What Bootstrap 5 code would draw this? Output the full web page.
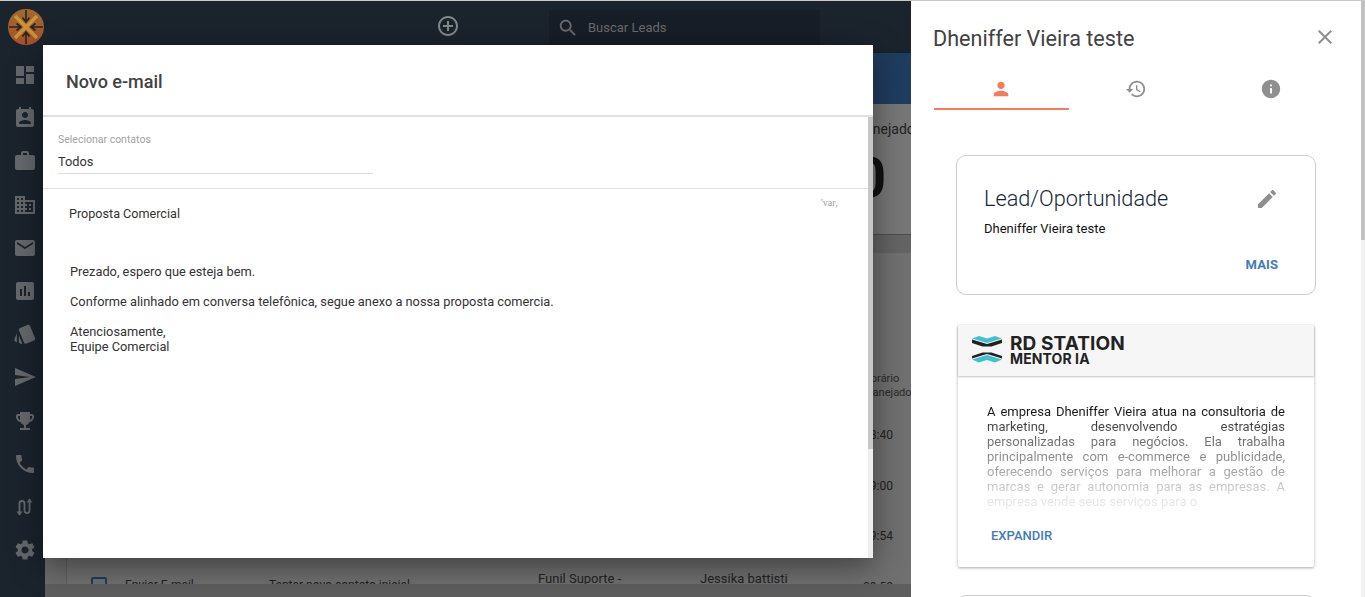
<!DOCTYPE html>
<html lang="pt-BR"><head><meta charset="utf-8"><title>Novo e-mail</title>
<link href="https://cdn.jsdelivr.net/npm/bootstrap@5.3.0/dist/css/bootstrap.min.css" rel="stylesheet">
<style>
html,body{height:100%;overflow:hidden}
body{font-family:Roboto,"Liberation Sans",sans-serif;background:#666;color:#212121;font-size:13px}
.shell{height:597px;border-top:1px solid #c8c8c8;position:relative;overflow:hidden}
.side-rail{width:45px;background:#1b232d;flex:none;padding-left:5px}
.rail-logo{height:50px;padding:8px 0 0 2px}
.rail-icons{gap:19.2px;padding-top:12px}
.rail-icons svg{width:24px;height:24px;fill:#65686c;display:block}
.main-pane{background:#6c6c6c;min-width:0}
.top-strip{height:52px;background:#1b232d;flex:none;padding:9px 0 0 391px}
.top-strip svg{fill:#85888b}
.plus-ico{width:24px;height:24px;margin-top:-2px}
.find-box{width:271px;height:35px;margin-left:89px;background:#181e27;color:#686b6f;font-size:13px;padding-left:8px;gap:9px;margin-top:0}
.find-box svg{width:22px;height:22px;fill:#686b6f!important}
.blue-band{height:51px;background:#1f3d5f;flex:none;box-shadow:0 1px 3px rgba(0,0,0,.4)}
.kpi-strip{height:131px;background:#777;flex:none;padding-left:808px;border-bottom:1px solid #4d4d4d;overflow:hidden}
.kpi-box{width:140px;flex:none}
.kpi-label{font-size:14px;margin-top:17px;color:#222;line-height:17px}
.kpi-num{font-size:56px;font-weight:700;color:#111;line-height:1;margin-top:12px;padding-left:1px}
.gap-strip{height:18px;background:#646464;flex:none}
.list-area{flex:1;min-height:0;padding-left:22px;overflow:hidden}
.list-box{background:#707070;height:100%;box-shadow:-1px 0 0 #5f5f5f;padding-top:119px;color:#222}
.head-row{height:46px;position:relative}
.head-col{position:absolute;left:796px;top:0;font-size:11px;line-height:14px;color:#2a2a2a;white-space:nowrap}
.data-row{height:50.5px;position:relative}
.data-row>span{position:absolute;white-space:nowrap;font-size:12px}
.t-time{left:796px;top:8px}
.row-check{left:24px;top:7px;width:16px;height:16px;border:2px solid #1f3d5f;border-radius:2px}
.c1{left:58px;top:6px}.c2{left:202px;top:6px}.c3{left:471px;top:-1px;font-size:13px!important}.c4{left:633px;top:-1px;font-size:13px!important}
.foot-strip{height:13px;background:#5e5e5e;flex:none}
.mail-dialog{position:absolute;left:43px;top:44px;width:830px;height:513px;background:#fff;box-shadow:0 8px 30px rgba(0,0,0,.45);display:flex;flex-direction:column}
.mail-head{height:72px;flex:none;border-bottom:2px solid #e0e0e0;padding:0 23px;font-size:18px;font-weight:500;color:#424242;line-height:73px}
.mail-body{flex:1;min-height:0}
.mail-scroll{flex:1;min-width:0;overflow:hidden}
.rail-track{background:#eee;flex:none;width:5px}
.rail-thumb{background:#c8c8c8;width:100%}
.thumb-mail{height:332px}
.mail-inner{position:relative}
.contact-area{height:72px;border-bottom:1px solid #e0e0e0;padding:16px 15px 0}
.contact-label{font-size:10.5px;color:#a3a3a3;line-height:13px}
.contact-value{width:315px;border-bottom:1px solid #ddd;line-height:26px;margin-top:3px;height:25px;color:#333;font-size:12.8px}
.mail-text{padding:17px 27px;color:#333;line-height:15px;font-size:12.8px}
.mail-subject{margin-left:-1px;margin-bottom:43px;font-size:12.6px}
.mail-text p{margin:0 0 15px}
.var-mark{position:absolute;left:778px;top:80px;font-family:"Liberation Serif",serif;font-size:10px;color:#999;line-height:12px}
.lead-panel{position:absolute;right:0;top:0;width:454px;height:596px;background:#fff;overflow:hidden}
.lead-rail{position:absolute;right:0;top:0;bottom:0;width:4px;background:#f1f1f1}
.thumb-lead{height:239px;background:#c1c1c1}
.lead-inner{padding:0 0 0 22px}
.lead-title{height:74px;padding-top:21px;padding-right:28px}
.lead-title h1{font-size:21.6px;font-weight:400;color:#424242;margin:0;line-height:34px}
.lead-title svg{width:24px;height:24px;fill:#8f8f8f;margin-top:3px}
.tab-row{width:405px;margin-left:1px}
.tab-item{width:135px;height:35px;text-align:center;border-bottom:2px solid transparent}
.tab-item svg{width:22px;height:22px;fill:#8f8f8f;display:inline-block;margin:3px 2px 0 0}
.tab-item.on{border-bottom-color:#f47c56}
.tab-item.on svg{fill:#f47c56}
.lead-box.card{width:360px;height:140px;margin:45px 0 0 23px;border:1px solid #ccc;border-radius:10px;padding:0 27px;color:#111}
.lead-box-title{font-size:21.7px;font-weight:300;color:#14263a;margin-top:26px;line-height:34px}
.lead-box svg{width:24px;height:24px;fill:#8f8f8f;margin-right:9px}
.lead-name{font-size:13px;line-height:15px;margin-top:5px;color:#111}
.more-link{font-size:13px;font-weight:700;color:#3f7cba;letter-spacing:.1px;margin-top:21px;margin-right:10px;line-height:15px}
.mentor-card.card{width:356px;height:242px;margin:30px 0 0 25px;border:0;border-radius:2px;box-shadow:0 1px 3px rgba(0,0,0,.35)}
.mentor-head{height:51px;background:#f6f6f6;box-shadow:0 1px 2px rgba(0,0,0,.25);padding:10px 0 0 14px;gap:8px}
.mentor-head svg{width:30px;height:30px;flex:none}
.brand-a{font-family:Inter,sans-serif;font-weight:700;font-size:19px;line-height:18px;color:#222;letter-spacing:.1px}
.brand-b{font-family:Inter,sans-serif;font-weight:700;font-size:14px;line-height:12px;color:#222;letter-spacing:.1px}
.mentor-copy{margin:28px 29px 0;height:105px;overflow:hidden;text-align:justify;line-height:15px;font-size:13px;color:#111;-webkit-mask-image:linear-gradient(#000 5%,rgba(0,0,0,.6) 36%,rgba(0,0,0,.38) 64%,rgba(0,0,0,.1) 93%);mask-image:linear-gradient(#000 5%,rgba(0,0,0,.6) 36%,rgba(0,0,0,.38) 64%,rgba(0,0,0,.1) 93%)}
.expand-link{font-size:13px;font-weight:500;color:#3f7cba;margin:19px 0 0 33px;line-height:15px}
.next-box{width:360px;height:200px;margin:28px 0 0 23px;border:1px solid #ccc;border-radius:10px}
</style></head><body>
<div class="shell d-flex">
  <nav class="side-rail d-flex flex-column align-items-center">
    <div class="rail-logo">
      <svg width="36" height="36" viewBox="0 0 36 36"><defs><linearGradient id="lg" x1="0" y1="0" x2="0" y2="1"><stop offset="0" stop-color="#a06a30"/><stop offset="1" stop-color="#a8502c"/></linearGradient></defs>
      <circle cx="18" cy="18" r="18" fill="url(#lg)"/>
      <path d="M7 7L29 29M29 7L7 29" stroke="#c9943a" stroke-width="3.500"/>
      <path d="M18 1v11M14.500 8.500L18 13l3.500-4.500M18 35V24M14.500 27.500L18 23l3.500 4.500M1 18h11M8.500 14.500L13 18l-4.500 3.500M35 18H24M27.500 14.500L23 18l4.500 3.500" stroke="#2a2422" stroke-width="1.600" fill="none"/></svg>
    </div>
    <div class="rail-icons d-flex flex-column">
      <svg viewBox="0 0 24 24"><path d="M3 13h8V3H3v10zm0 8h8v-6H3v6zm10 0h8V11h-8v10zm0-18v6h8V3h-8z"/></svg>
      <svg viewBox="0 0 24 24"><path d="M19 3h-1V1h-2v2H8V1H6v2H5c-1.110 0-2 .9-2 2v14c0 1.100.89 2 2 2h14c1.100 0 2-.9 2-2V5c0-1.100-.9-2-2-2zm-7 3c1.660 0 3 1.340 3 3s-1.340 3-3 3-3-1.340-3-3 1.340-3 3-3zm6 12H6v-1c0-2 4-3.100 6-3.100s6 1.100 6 3.100v1z"/></svg>
      <svg viewBox="0 0 24 24"><path d="M20 6h-4V4c0-1.110-.89-2-2-2h-4c-1.110 0-2 .89-2 2v2H4c-1.110 0-1.990.89-1.990 2L2 19c0 1.110.89 2 2 2h16c1.110 0 2-.89 2-2V8c0-1.110-.89-2-2-2zm-6 0h-4V4h4v2z"/></svg>
      <svg viewBox="0 0 24 24"><path d="M12 7V3H2v18h20V7H12zM6 19H4v-2h2v2zm0-4H4v-2h2v2zm0-4H4V9h2v2zm0-4H4V5h2v2zm4 12H8v-2h2v2zm0-4H8v-2h2v2zm0-4H8V9h2v2zm0-4H8V5h2v2zm10 12h-8v-2h2v-2h-2v-2h2v-2h-2V9h8v10zm-2-8h-2v2h2v-2zm0 4h-2v2h2v-2z"/></svg>
      <svg viewBox="0 0 24 24"><path d="M20 4H4c-1.100 0-1.990.9-1.990 2L2 18c0 1.100.9 2 2 2h16c1.100 0 2-.9 2-2V6c0-1.100-.9-2-2-2zm0 4l-8 5-8-5V6l8 5 8-5v2z"/></svg>
      <svg viewBox="0 0 24 24"><path d="M19 3H5c-1.100 0-2 .9-2 2v14c0 1.100.9 2 2 2h14c1.100 0 2-.9 2-2V5c0-1.100-.9-2-2-2zM9 17H7v-7h2v7zm4 0h-2V7h2v10zm4 0h-2v-4h2v4z"/></svg>
      <svg viewBox="0 0 24 24"><path d="M2.530 19.650l1.340.56v-9.030l-2.430 5.860c-.41 1.020.08 2.190 1.090 2.610zm19.500-3.700L17.070 3.980c-.31-.75-1.040-1.210-1.810-1.230-.26 0-.53.04-.79.15L7.100 5.950c-.75.31-1.210 1.030-1.230 1.800-.01.27.04.54.15.8l4.960 11.970c.31.76 1.050 1.220 1.830 1.230.26 0 .52-.05.77-.15l7.360-3.050c1.020-.42 1.510-1.590 1.090-2.600zM5.880 19.750c0 1.100.9 2 2 2h1.450l-3.450-8.340v6.340z"/></svg>
      <svg viewBox="0 0 24 24"><path d="M2.010 21L23 12 2.010 3 2 10l15 2-15 2z"/></svg>
      <svg viewBox="0 0 24 24"><path d="M19 5h-2V3H7v2H5c-1.100 0-2 .9-2 2v1c0 2.550 1.920 4.630 4.390 4.940.63 1.500 1.980 2.630 3.610 2.960V19H7v2h10v-2h-4v-3.100c1.630-.33 2.980-1.460 3.610-2.960C19.080 12.630 21 10.550 21 8V7c0-1.100-.9-2-2-2zM5 8V7h2v3.820C5.840 10.400 5 9.300 5 8zm14 0c0 1.300-.84 2.400-2 2.820V7h2v1z"/></svg>
      <svg viewBox="0 0 24 24"><path d="M6.620 10.790c1.440 2.830 3.760 5.140 6.590 6.590l2.200-2.200c.27-.27.67-.36 1.020-.24 1.120.37 2.330.57 3.570.57.55 0 1 .45 1 1V20c0 .55-.45 1-1 1-9.390 0-17-7.610-17-17 0-.55.45-1 1-1h3.500c.55 0 1 .45 1 1 0 1.250.2 2.450.57 3.570.11.35.03.74-.25 1.020l-2.200 2.200z"/></svg>
      <svg viewBox="0 0 24 24"><path d="M6.500 20V8.500a2.500 2.500 0 0 1 5 0v7a2.500 2.500 0 0 0 5 0V4" fill="none" stroke="#65686c" stroke-width="1.800"/><path d="M3.500 16.500L6.500 20.500l3-4zM13.500 7.500L16.500 3.500l3 4z"/></svg>
      <svg viewBox="0 0 24 24"><path d="M19.140 12.940c.04-.3.06-.61.06-.94 0-.32-.02-.64-.07-.94l2.030-1.580c.18-.14.23-.41.12-.61l-1.920-3.320c-.12-.22-.37-.29-.59-.22l-2.390.96c-.5-.38-1.030-.7-1.620-.94l-.36-2.540c-.04-.24-.24-.41-.48-.41h-3.840c-.24 0-.43.17-.47.41l-.36 2.540c-.59.24-1.130.57-1.620.94l-2.390-.96c-.22-.08-.47 0-.59.22L2.740 8.870c-.12.21-.08.47.12.61l2.030 1.580c-.05.3-.09.63-.09.94s.02.64.07.94l-2.030 1.580c-.18.14-.23.41-.12.61l1.920 3.320c.12.22.37.29.59.22l2.390-.96c.5.38 1.030.7 1.620.94l.36 2.540c.05.24.24.41.48.41h3.840c.24 0 .44-.17.47-.41l.36-2.540c.59-.24 1.130-.56 1.620-.94l2.390.96c.22.08.47 0 .59-.22l1.920-3.320c.12-.22.07-.47-.12-.61l-2.010-1.580zM12 15.600c-1.980 0-3.600-1.620-3.600-3.600s1.620-3.600 3.600-3.600 3.600 1.620 3.600 3.600-1.620 3.600-3.600 3.600z"/></svg>
    </div>
  </nav>
  <div class="main-pane flex-grow-1 d-flex flex-column">
    <header class="top-strip d-flex align-items-start">
      <svg class="plus-ico mt-1" viewBox="0 0 24 24"><path d="M13 7h-2v4H7v2h4v4h2v-4h4v-2h-4V7zm-1-5C6.480 2 2 6.480 2 12s4.480 10 10 10 10-4.480 10-10S17.520 2 12 2zm0 18c-4.410 0-8-3.590-8-8s3.590-8 8-8 8 3.590 8 8-3.590 8-8 8z"/></svg>
      <div class="find-box d-flex align-items-center">
        <svg viewBox="0 0 24 24"><path d="M15.500 14h-.79l-.28-.27C15.410 12.590 16 11.110 16 9.500 16 5.910 13.090 3 9.500 3S3 5.910 3 9.500 5.910 16 9.500 16c1.610 0 3.090-.59 4.230-1.570l.27.28v.79l5 4.990L20.490 19l-4.990-5zm-6 0C7.010 14 5 11.990 5 9.500S7.010 5 9.500 5 14 7.010 14 9.500 11.990 14 9.500 14z"/></svg>
        <span>Buscar Leads</span>
      </div>
    </header>
    <div class="blue-band"></div>
    <div class="kpi-strip d-flex">
      <div class="kpi-box"><div class="kpi-label">Planejado</div><div class="kpi-num">0</div></div>
    </div>
    <div class="gap-strip"></div>
    <div class="list-area">
      <div class="list-box">
        <div class="head-row"><div class="head-col">Horário<br>Planejado</div></div>
        <div class="data-row"><span class="t-time">08:40</span></div>
        <div class="data-row"><span class="t-time">09:00</span></div>
        <div class="data-row"><span class="t-time">09:54</span></div>
        <div class="data-row"><span class="row-check"></span><span class="c1">Enviar E-mail</span><span class="c2">Tentar novo contato inicial</span><span class="c3">Funil Suporte -</span><span class="c4">Jessika battisti</span><span class="t-time">09:52</span></div>
      </div>
    </div>
    <div class="foot-strip"></div>
  </div>

  <section class="mail-dialog">
    <div class="mail-head">Novo e-mail</div>
    <div class="mail-body d-flex">
      <div class="mail-scroll"><div class="mail-inner">
        <div class="contact-area">
          <div class="contact-label">Selecionar contatos</div>
          <div class="contact-value">Todos</div>
        </div>
        <span class="var-mark">'var,</span>
        <div class="mail-text">
          <div class="mail-subject">Proposta Comercial</div>
          <p>Prezado, espero que esteja bem.</p>
          <p>Conforme alinhado em conversa telefônica, segue anexo a nossa proposta comercia.</p>
          <p>Atenciosamente,<br>Equipe Comercial</p>
        </div>
      </div></div>
      <div class="rail-track"><div class="rail-thumb thumb-mail"></div></div>
    </div>
  </section>

  <aside class="lead-panel"><div class="lead-inner">
    <div class="lead-title d-flex justify-content-between align-items-start">
      <h1>Dheniffer Vieira teste</h1>
      <svg viewBox="0 0 24 24"><path d="M19 6.410L17.590 5 12 10.590 6.410 5 5 6.410 10.590 12 5 17.590 6.410 19 12 13.410 17.590 19 19 17.590 13.410 12z"/></svg>
    </div>
    <div class="tab-row d-flex">
      <div class="tab-item on"><svg viewBox="0 0 24 24"><path d="M12 12c2.210 0 4-1.790 4-4s-1.790-4-4-4-4 1.790-4 4 1.790 4 4 4zm0 2c-2.670 0-8 1.340-8 4v2h16v-2c0-2.660-5.330-4-8-4z"/></svg></div>
      <div class="tab-item"><svg viewBox="0 0 24 24"><path d="M13 3c-4.970 0-9 4.030-9 9H1l3.890 3.890.07.14L9 12H6c0-3.870 3.130-7 7-7s7 3.130 7 7-3.130 7-7 7c-1.930 0-3.680-.79-4.940-2.060l-1.420 1.420C8.270 19.990 10.510 21 13 21c4.970 0 9-4.030 9-9s-4.030-9-9-9zm-1 5v5l4.280 2.540.72-1.210-3.500-2.080V8H12z"/></svg></div>
      <div class="tab-item"><svg viewBox="0 0 24 24"><path d="M12 2C6.480 2 2 6.480 2 12s4.480 10 10 10 10-4.480 10-10S17.520 2 12 2zm1 15h-2v-6h2v6zm0-8h-2V7h2v2z"/></svg></div>
    </div>
    <div class="card lead-box">
      <div class="d-flex justify-content-between align-items-center lead-box-title"><span>Lead/Oportunidade</span><svg viewBox="0 0 24 24"><path d="M3 17.250V21h3.750L17.810 9.940l-3.750-3.750L3 17.250zM20.710 7.040c.39-.39.39-1.020 0-1.410l-2.340-2.340c-.39-.39-1.020-.39-1.410 0l-1.830 1.830 3.750 3.750 1.830-1.830z"/></svg></div>
      <div class="lead-name">Dheniffer Vieira teste</div>
      <div class="more-link text-end">MAIS</div>
    </div>
    <div class="card mentor-card">
      <div class="mentor-head d-flex">
        <svg viewBox="0 0 30 30"><path d="M0 3.500L7 1l8 2.500L23 1l7 2.500L15 8z" fill="#3fc1cf"/><path d="M0 4.500L15 9l15-4.500V8l-10.500 3.500h-9L0 8z" fill="#222"/><path d="M0 23.500L15 19l15 4.500V21l-10.500-3.500h-9L0 21z" fill="#222"/><path d="M0 24.500L15 20l15 4.500L23 27.500l-8-2.500-8 2.500z" fill="#3fc1cf"/></svg>
        <div><div class="brand-a">RD STATION</div><div class="brand-b">MENTOR IA</div></div>
      </div>
      <div class="mentor-copy">A empresa Dheniffer Vieira atua na consultoria de marketing, desenvolvendo estratégias personalizadas para negócios. Ela trabalha principalmente com e-commerce e publicidade, oferecendo serviços para melhorar a gestão de marcas e gerar autonomia para as empresas. A empresa vende seus serviços para o</div>
      <div class="expand-link">EXPANDIR</div>
    </div>
    <div class="next-box"></div>
  </div><div class="lead-rail"><div class="thumb-lead"></div></div></aside>
</div>
<script src="https://cdn.jsdelivr.net/npm/bootstrap@5.3.0/dist/js/bootstrap.bundle.min.js"></script>
</body></html>
